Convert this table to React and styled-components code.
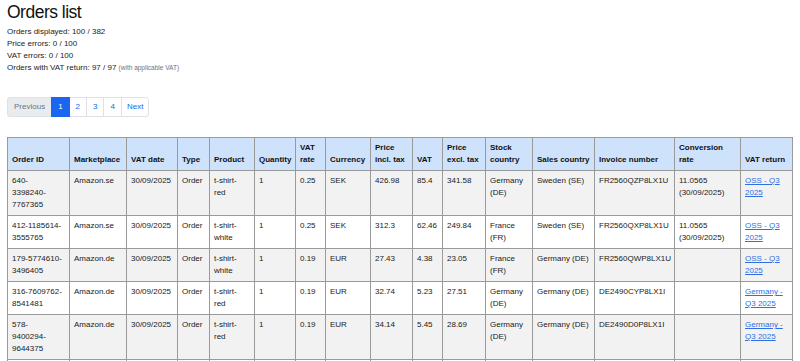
import React from "react";
import styled, { createGlobalStyle } from "styled-components";

const GlobalStyle = createGlobalStyle`
  body {
    margin: 0;
    background: #fff;
    color: #212529;
    font-family: "Liberation Sans", Arial, sans-serif;
  }
`;

const Page = styled.div`
  padding: 0 8px 0 7px;
`;

const Title = styled.h1`
  margin: 2px 0 4px;
  font-size: 17.5px;
  line-height: 20px;
  font-weight: 500;
  letter-spacing: -0.5px;
  color: #111;
`;

const Stats = styled.div`
  font-size: 8px;
  line-height: 12px;
  color: #1a1a1a;
`;

const Muted = styled.span`
  font-size: 6.5px;
  color: #6c757d;
`;

const Pager = styled.ul`
  display: flex;
  list-style: none;
  margin: 23px 0 20px;
  padding: 0;
`;

const PageItem = styled.li`
  font-size: 8px;
  line-height: 12px;
  padding: 3px ${(p) => (p.$wide ? "6px" : "6px")};
  border: 1px solid #dee2e6;
  margin-left: -1px;
  background: ${(p) => (p.$active ? "#1a66f0" : p.$disabled ? "#e9ecef" : "#fff")};
  border-color: ${(p) => (p.$active ? "#1a66f0" : "#dee2e6")};
  color: ${(p) => (p.$active ? "#fff" : p.$disabled ? "#6c757d" : "#1a66f0")};
  position: relative;
  z-index: ${(p) => (p.$active ? 1 : 0)};

  &:first-child {
    margin-left: 0;
    border-radius: 3px 0 0 3px;
  }
  &:last-child {
    padding: 3px 5px;
    border-radius: 0 3px 3px 0;
  }
`;

const Table = styled.table`
  width: 100%;
  table-layout: fixed;
  border-collapse: collapse;
  font-size: 8px;
  line-height: 12px;
`;

const Th = styled.th`
  background: #cfe2fb;
  border: 1px solid #9a9a9a;
  padding: 4px 4px;
  text-align: left;
  vertical-align: bottom;
  font-weight: bold;
  color: #111;
`;

const Row = styled.tr`
  background: ${(p) => (p.$striped ? "#f2f2f2" : "#fff")};
`;

const Td = styled.td`
  border: 1px solid #9a9a9a;
  padding: 4px 4px;
  vertical-align: top;
  color: #1a1a1a;
  white-space: ${(p) => (p.$lines ? "pre-line" : "normal")};
`;

const Link = styled.a`
  color: #2f6fe4;
  text-decoration: underline;
`;

const columns = [
  ["Order ID", 62],
  ["Marketplace", 57],
  ["VAT date", 51],
  ["Type", 32],
  ["Product", 45],
  ["Quantity", 41],
  ["VAT rate", 30],
  ["Currency", 45],
  ["Price incl. tax", 42],
  ["VAT", 30],
  ["Price excl. tax", 43],
  ["Stock country", 47],
  ["Sales country", 62],
  ["Invoice number", 80],
  ["Conversion rate", 66],
  ["VAT return", 52],
];

const orders = [
  ["640-\n3398240-\n7767365", "Amazon.se", "t-shirt-\nred", "0.25", "SEK", "426.98", "85.4", "341.58", "Germany (DE)", "Sweden (SE)", "FR2560QZP8LX1U", "11.0565 (30/09/2025)", "OSS - Q3 2025"],
  ["412-1185614-\n3555765", "Amazon.se", "t-shirt-\nwhite", "0.25", "SEK", "312.3", "62.46", "249.84", "France (FR)", "Sweden (SE)", "FR2560QXP8LX1U", "11.0565 (30/09/2025)", "OSS - Q3 2025"],
  ["179-5774610-\n3496405", "Amazon.de", "t-shirt-\nwhite", "0.19", "EUR", "27.43", "4.38", "23.05", "France (FR)", "Germany (DE)", "FR2560QWP8LX1U", "", "OSS - Q3 2025"],
  ["316-7609762-\n8541481", "Amazon.de", "t-shirt-\nred", "0.19", "EUR", "32.74", "5.23", "27.51", "Germany (DE)", "Germany (DE)", "DE2490CYP8LX1I", "", "Germany - Q3 2025"],
  ["578-\n9400294-\n9644375", "Amazon.de", "t-shirt-\nred", "0.19", "EUR", "34.14", "5.45", "28.69", "Germany (DE)", "Germany (DE)", "DE2490D0P8LX1I", "", "Germany - Q3 2025"],
  ["302-4417785-\n1203386", "Amazon.de", "t-shirt-\nwhite", "0.19", "EUR", "29.90", "4.77", "25.13", "Germany (DE)", "Germany (DE)", "DE2490D1P8LX1I", "", "Germany - Q3 2025"],
];

export default function App() {
  return (
    <Page>
      <GlobalStyle />
      <Title>Orders list</Title>
      <Stats>
        <div>Orders displayed: 100 / 382</div>
        <div>Price errors: 0 / 100</div>
        <div>VAT errors: 0 / 100</div>
        <div>
          Orders with VAT return: 97 / 97 <Muted>(with applicable VAT)</Muted>
        </div>
      </Stats>
      <Pager>
        <PageItem $disabled>Previous</PageItem>
        <PageItem $active>1</PageItem>
        <PageItem>2</PageItem>
        <PageItem>3</PageItem>
        <PageItem>4</PageItem>
        <PageItem>Next</PageItem>
      </Pager>
      <Table>
        <colgroup>
          {columns.map(([name, w]) => (
            <col key={name} style={{ width: w }} />
          ))}
        </colgroup>
        <thead>
          <tr>
            {columns.map(([name]) => (
              <Th key={name}>{name}</Th>
            ))}
          </tr>
        </thead>
        <tbody>
          {orders.map((o, i) => (
            <Row key={o[0]} $striped={i % 2 === 0}>
              <Td $lines>{o[0]}</Td>
              <Td>{o[1]}</Td>
              <Td>30/09/2025</Td>
              <Td>Order</Td>
              <Td $lines>{o[2]}</Td>
              <Td>1</Td>
              <Td>{o[3]}</Td>
              <Td>{o[4]}</Td>
              <Td>{o[5]}</Td>
              <Td>{o[6]}</Td>
              <Td>{o[7]}</Td>
              <Td>{o[8]}</Td>
              <Td>{o[9]}</Td>
              <Td>{o[10]}</Td>
              <Td>{o[11]}</Td>
              <Td>
                <Link href="#">{o[12]}</Link>
              </Td>
            </Row>
          ))}
        </tbody>
      </Table>
    </Page>
  );
}
